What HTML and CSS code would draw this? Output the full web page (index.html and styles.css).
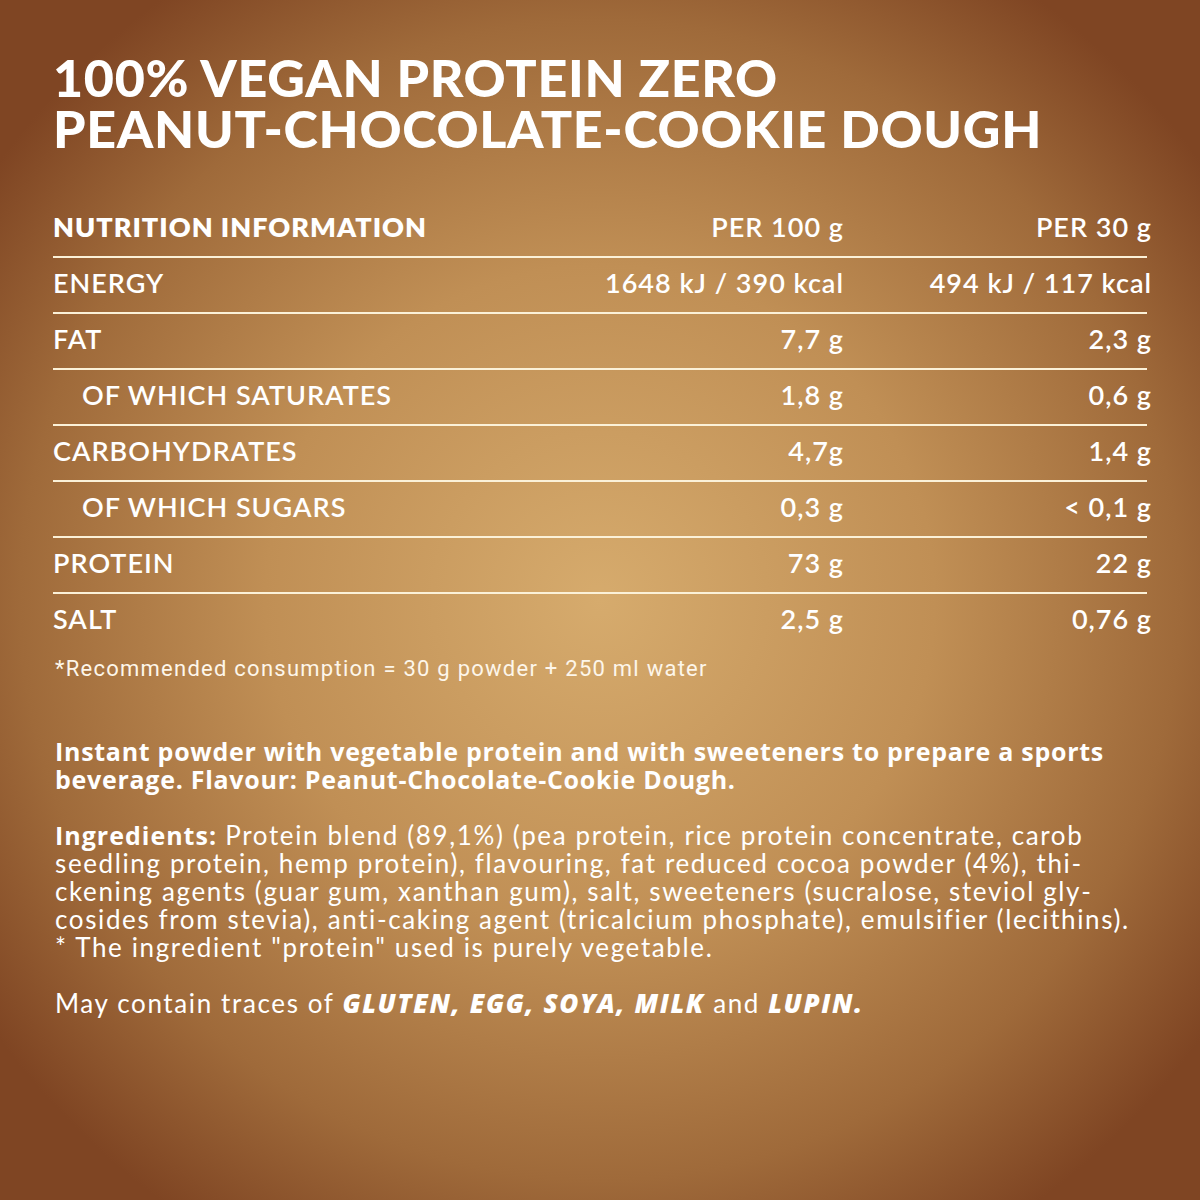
FILE: index.html
```html
<!DOCTYPE html>
<html lang="en">
<head>
<meta charset="utf-8">
<title>100% Vegan Protein Zero</title>
<link rel="stylesheet" href="styles.css">
</head>
<body>
<main class="page">
  <h1 class="title">100% VEGAN PROTEIN ZERO<br>PEANUT-CHOCOLATE-COOKIE DOUGH</h1>

  <div class="table">
    <div class="row head">
      <span class="label">NUTRITION INFORMATION</span>
      <span class="val">PER 100 g</span>
      <span class="val">PER 30 g</span>
    </div>
    <div class="row">
      <span class="label">ENERGY</span>
      <span class="val">1648 kJ / 390 kcal</span>
      <span class="val">494 kJ / 117 kcal</span>
    </div>
    <div class="row">
      <span class="label">FAT</span>
      <span class="val">7,7 g</span>
      <span class="val">2,3 g</span>
    </div>
    <div class="row">
      <span class="label sub">OF WHICH SATURATES</span>
      <span class="val">1,8 g</span>
      <span class="val">0,6 g</span>
    </div>
    <div class="row">
      <span class="label">CARBOHYDRATES</span>
      <span class="val">4,7g</span>
      <span class="val">1,4 g</span>
    </div>
    <div class="row">
      <span class="label sub">OF WHICH SUGARS</span>
      <span class="val">0,3 g</span>
      <span class="val">&lt; 0,1 g</span>
    </div>
    <div class="row">
      <span class="label">PROTEIN</span>
      <span class="val">73 g</span>
      <span class="val">22 g</span>
    </div>
    <div class="row last">
      <span class="label">SALT</span>
      <span class="val">2,5 g</span>
      <span class="val">0,76 g</span>
    </div>
  </div>

  <p class="note">*Recommended consumption = 30 g powder + 250 ml water</p>

  <p class="desc">Instant powder with vegetable protein and with sweeteners to prepare a sports<br>beverage. Flavour: Peanut-Chocolate-Cookie Dough.</p>

  <p class="ingr"><b>Ingredients:</b> Protein blend (89,1%) (pea protein, rice protein concentrate, carob<br>seedling protein, hemp protein), flavouring, fat reduced cocoa powder (4%), thi-<br>ckening agents (guar gum, xanthan gum), salt, sweeteners (sucralose, steviol gly-<br>cosides from stevia), anti-caking agent (tricalcium phosphate), emulsifier (lecithins).<br>* The ingredient "protein" used is purely vegetable.</p>

  <p class="ingr traces">May contain traces of <em>GLUTEN, EGG, SOYA, MILK</em> and <em>LUPIN.</em></p>
</main>
</body>
</html>
```

FILE: styles.css
```css
html, body {
  margin: 0;
  padding: 0;
}
body {
  width: 1200px;
  height: 1200px;
  overflow: hidden;
  background: radial-gradient(ellipse 62% 62% at 50% 50%, #d6ab6d 0%, #c08f55 45%, #9f6a3a 78%, #7f4523 100%);
  color: #ffffff;
  font-family: Lato, "Noto Sans", sans-serif;
}
.page {
  padding: 52px 49px 0 53px;
}
.title {
  margin: 0;
  font-family: Lato, sans-serif;
  font-weight: 900;
  font-size: 52px;
  line-height: 51px;
  letter-spacing: 0.7px;
  color: #fff;
}
.table {
  margin-top: 48px;
}
.row {
  display: grid;
  grid-template-columns: 1fr 308px 300px;
  align-items: center;
  height: 54px;
  border-bottom: 2px solid #fbf1d8;
  font-size: 27px;
  line-height: 28px;
  font-weight: 600;
  letter-spacing: 1px;
  margin-right: 4px;
}
.row > span {
  position: relative;
  top: -2px;
}
.row .val {
  text-align: right;
}
.row .val:nth-child(2) {
  margin-right: 3px;
}
.row .val:last-child {
  margin-right: -5px;
}
.row.last {
  border-bottom: none;
}
.row.head .label {
  font-weight: 800;
}
.sub {
  padding-left: 29px;
}
.note {
  margin: 9px 0 0 2px;
  font-family: Roboto, sans-serif;
  font-size: 22px;
  line-height: 24px;
  letter-spacing: 1.25px;
  color: #fdf6ea;
}
.desc {
  margin: 56px 0 0 2px;
  font-family: "Open Sans", sans-serif;
  font-weight: 700;
  font-size: 25px;
  line-height: 28px;
  letter-spacing: 0.72px;
}
.ingr {
  margin: 28px 0 0 2px;
  font-family: Lato, sans-serif;
  font-size: 26px;
  line-height: 28px;
  letter-spacing: 1.62px;
}
.ingr b {
  font-family: "Open Sans", sans-serif;
  font-weight: 700;
  font-size: 25px;
  letter-spacing: 1px;
}
.traces em {
  font-family: "Open Sans", sans-serif;
  font-weight: 800;
  font-style: italic;
  font-size: 26px;
}
```
